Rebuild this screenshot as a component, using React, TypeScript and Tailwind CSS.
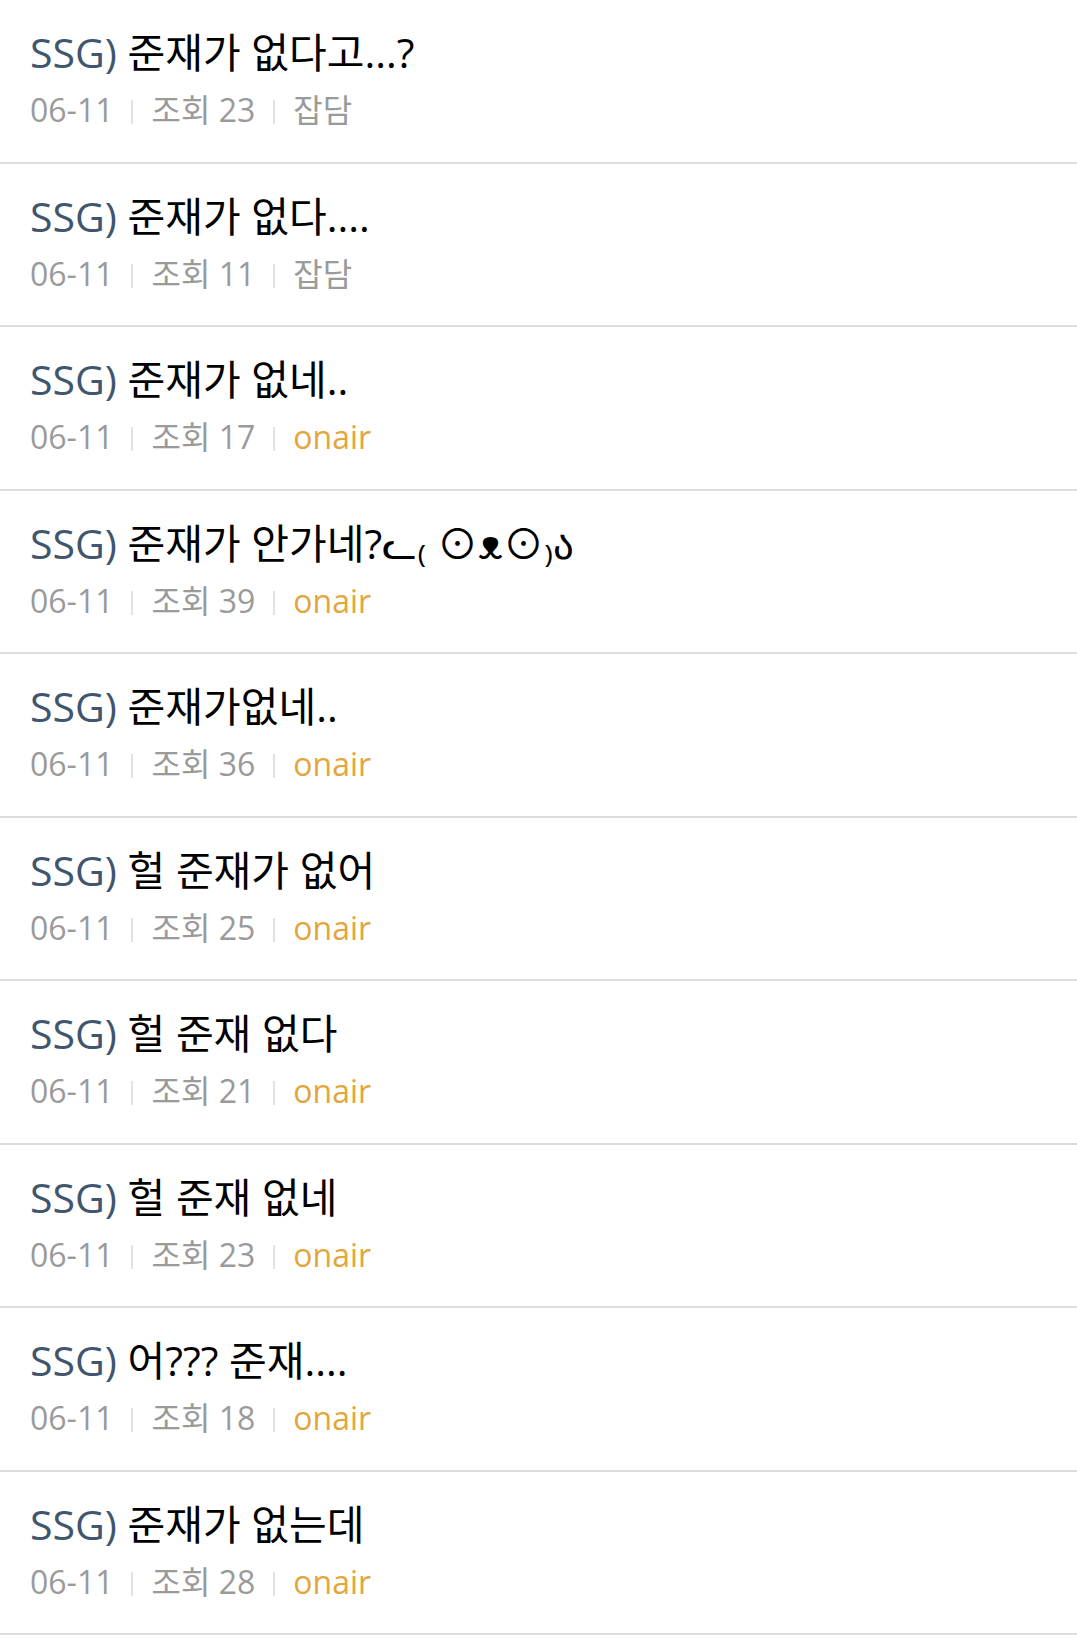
import React from "react";

interface Post {
  title: string;
  views: number;
  category: string;
}

const POSTS: Post[] = [
  { title: "준재가 없다고...?", views: 23, category: "잡담" },
  { title: "준재가 없다....", views: 11, category: "잡담" },
  { title: "준재가 없네..", views: 17, category: "onair" },
  { title: "준재가 안가네?ᓚ₍ ⊙ᴥ⊙₎ა", views: 39, category: "onair" },
  { title: "준재가없네..", views: 36, category: "onair" },
  { title: "헐 준재가 없어", views: 25, category: "onair" },
  { title: "헐 준재 없다", views: 21, category: "onair" },
  { title: "헐 준재 없네", views: 23, category: "onair" },
  { title: "어??? 준재....", views: 18, category: "onair" },
  { title: "준재가 없는데", views: 28, category: "onair" },
];

const Divider = () => (
  <span className="mx-[18px] inline-block h-[24px] w-[2px] bg-[#e2e2e2] align-[-2px]" />
);

const PostRow: React.FC<{ post: Post }> = ({ post }) => (
  <li className="border-b-2 border-[#dcdcdc] pl-[30px] pr-4 pt-[23px] pb-[29.5px]">
    <div className="text-[41px] leading-[58px] text-black whitespace-nowrap">
      <span className="text-[#3f566e]">SSG)</span> {post.title}
    </div>
    <div className="mt-[7px] text-[32px] leading-[44px] text-[#9a9a9a] whitespace-nowrap">
      <span>06-11</span>
      <Divider />
      <span>조회 {post.views}</span>
      <Divider />
      <span className={post.category === "onair" ? "text-[#e3a63c]" : ""}>
        {post.category}
      </span>
    </div>
  </li>
);

export default function App() {
  return (
    <div
      className="min-h-[1644px] w-[1077px] bg-white"
      style={{ fontFamily: '"Open Sans", "Noto Sans CJK KR", sans-serif' }}
    >
      <ul>
        {POSTS.map((p, i) => (
          <PostRow key={i} post={p} />
        ))}
      </ul>
    </div>
  );
}
